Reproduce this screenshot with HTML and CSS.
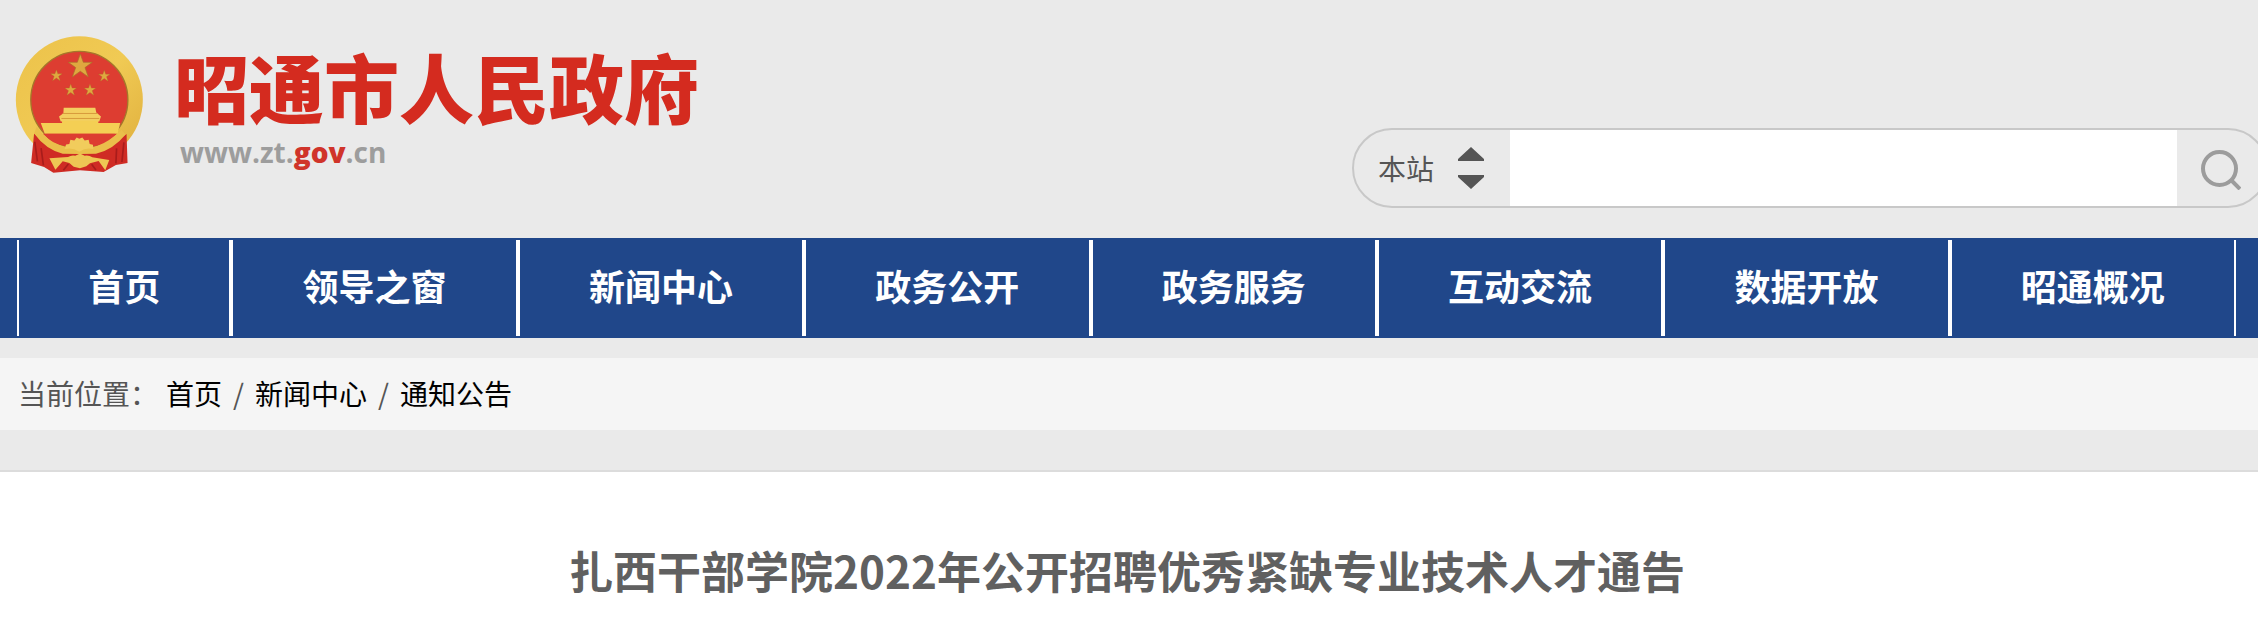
FILE: index.html
```
<!DOCTYPE html>
<html lang="zh-CN">
<head>
    <meta charset="UTF-8">
    <meta name="viewport" content="width=device-width, initial-scale=1.0">
    <title>昭通市人民政府</title>
    <link rel="stylesheet" href="styles.css">
</head>
<body>
    <header class="header">
        <a class="logo" href="#">
            <svg class="emblem" viewBox="45 48 387 412" aria-hidden="true">
                <defs>
                    <linearGradient id="gold" x1="0" y1="0" x2="1" y2="1">
                        <stop offset="0" stop-color="#ecc24a"/>
                        <stop offset="0.5" stop-color="#f0ca54"/>
                        <stop offset="1" stop-color="#dfae3c"/>
                    </linearGradient>
                    <path id="star" d="M0-36 9-11 36-11 14 5 24 33 0 16-24 33-14 5-36-11-9-11Z"/>
                </defs>
                <circle cx="238" cy="240" r="191" fill="url(#gold)"/>
                <circle cx="238" cy="240" r="146" fill="#dd3d31" stroke="#a4772a" stroke-width="4"/>
                <g fill="#dfa83f" stroke="#a8702a" stroke-width="2">
                    <use href="#star" transform="translate(241 138)"/>
                    <use href="#star" transform="translate(169 167) scale(.48)"/>
                    <use href="#star" transform="translate(313 168) scale(.48)"/>
                    <use href="#star" transform="translate(212 210) scale(.48)"/>
                    <use href="#star" transform="translate(270 210) scale(.48)"/>
                </g>
                <path d="M191 264H286L289 278 303 290 298 305H182L177 290 190 280Z" fill="#f3cf60"/>
                <path d="M188 281H292M184 296H298" stroke="#d79b3c" stroke-width="3"/>
                <path d="M122 310H186V303H295V310H361L353 342H134Z" fill="#f4cf54"/>
                <path d="M102 341 134 366 180 386 203 393 240 388 282 392 345 368 380 343 383 430 348 436 311 457 240 452 160 459 132 442 93 430Z" fill="#cf2b24"/>
                <path d="M128 342H352L318 371 278 381 240 362 200 381 158 369Z" fill="#dd3d31"/>
                <path d="M102 341Q137 389 188 402L238 403 288 402Q340 390 377 344L365 330 345 348Q310 376 278 382L240 388 200 382Q158 374 127 342L110 320Z" fill="#eabf4b"/>
                <path d="M194 388 198 374 208 373 211 360 223 362 230 353 238 357 247 353 254 362 266 360 269 373 279 375 280 388Q258 382 238 396 217 382 194 388Z" fill="#f1cc5c"/>
                <path d="M148 416 204 412Q214 405 226 408L240 401 254 408Q268 406 277 413L328 421 316 452 296 424 270 431 259 440 240 446 221 441 208 430 188 425 166 450Z" fill="#eec654"/>
                <path d="M104 366 112 425M123 385 130 437M372 368 366 427M350 386 348 431M205 433 190 452M275 434 288 451" stroke="#a81c1b" stroke-width="5" fill="none"/>
            </svg>
            <span class="logo-text">
                <span class="site-name">昭通市人民政府</span>
                <span class="site-url">www.zt.<b>gov</b>.cn</span>
            </span>
        </a>
        <form class="search">
            <label class="scope">
                <select class="scope-select" aria-label="搜索范围">
                    <option>本站</option>
                </select>
                <svg class="scope-arrows" viewBox="0 0 26 42" aria-hidden="true">
                    <path d="M13 0 26 12V14H0V12ZM0 28H26V30L13 42 0 30Z" fill="#555"/>
                </svg>
            </label>
            <input class="search-input" type="text" aria-label="搜索">
            <button class="search-btn" type="submit" aria-label="搜索">
                <svg class="search-icon" viewBox="0 0 40 40" fill="none" stroke="#9c9c9c" stroke-width="4" aria-hidden="true">
                    <circle cx="18.500" cy="18.500" r="16.500"/>
                    <path d="M30 30 39 39"/>
                </svg>
            </button>
        </form>
    </header>

    <nav class="nav">
        <ul class="nav-list">
            <li><a href="#">首页</a></li>
            <li><a href="#">领导之窗</a></li>
            <li><a href="#">新闻中心</a></li>
            <li><a href="#">政务公开</a></li>
            <li><a href="#">政务服务</a></li>
            <li><a href="#">互动交流</a></li>
            <li><a href="#">数据开放</a></li>
            <li><a href="#">昭通概况</a></li>
        </ul>
    </nav>

    <div class="breadcrumb">
        <span class="label">当前位置：</span>
        <a href="#">首页</a>
        <span class="slash">/</span>
        <a href="#">新闻中心</a>
        <span class="slash">/</span>
        <a href="#">通知公告</a>
    </div>

    <main class="article">
        <h1>扎西干部学院2022年公开招聘优秀紧缺专业技术人才通告</h1>
    </main>
</body>
</html>
```
FILE: styles.css
```
* {
    box-sizing: border-box;
}

body {
    margin: 0;
    min-height: 100vh;
    display: flex;
    flex-direction: column;
    overflow-x: hidden;
    background-color: #eaeaea;
    font-family: "Noto Sans CJK SC", sans-serif;
    font-size: 28px;
    color: #555;
}

a {
    color: inherit;
    text-decoration: none;
}

.header {
    display: flex;
    justify-content: space-between;
    align-items: flex-end;
    padding: 36px 0 30px 15px;
}

.logo {
    display: flex;
    align-items: flex-start;
    gap: 30px;
    padding-bottom: 35px;
}

.emblem {
    width: 129px;
    height: 137px;
}

.logo-text {
    display: flex;
    flex-direction: column;
}

.site-name {
    font-size: 75px;
    line-height: 100px;
    font-weight: 900;
    color: #d42b1f;
}

.site-url {
    padding-left: 6px;
    font-family: "Open Sans", sans-serif;
    font-size: 28px;
    line-height: 32px;
    font-weight: bold;
    color: #9d9d9d;
}

.site-url b {
    color: #d0342a;
}

/* the pill runs slightly past the right edge of the page */
.search {
    display: flex;
    width: 916px;
    height: 80px;
    margin-right: -10px;
    border: 2px solid #c8c8c8;
    border-radius: 40px;
    overflow: hidden;
}

.scope {
    display: flex;
    align-items: center;
    gap: 24px;
    width: 156px;
    padding-left: 24px;
}

.scope-select {
    appearance: none;
    width: 56px;
    padding: 0;
    border: none;
    background: none;
    font-family: inherit;
    font-size: 28px;
    color: #555;
}

.scope-arrows {
    width: 26px;
    height: 42px;
}

.search-input {
    flex: 1;
    min-width: 0;
    padding: 0 16px;
    border: none;
    background-color: #fff;
    font-family: inherit;
    font-size: 28px;
    outline: none;
}

.search-btn {
    display: flex;
    align-items: center;
    width: 89px;
    padding: 4px 0 0 24px;
    border: none;
    background: none;
    cursor: pointer;
}

.search-icon {
    width: 40px;
    height: 40px;
}

.nav {
    padding: 2px 22px 2px 17px;
    background-color: #20478a;
}

.nav-list {
    display: flex;
    margin: 0;
    padding: 0;
    list-style: none;
}

.nav-list li {
    flex: 1 1 auto;
    border: solid #fff;
    border-width: 0 2px;
    text-align: center;
}

.nav-list a {
    display: block;
    padding: 0 68px 6px;
    font-size: 36px;
    line-height: 90px;
    font-weight: bold;
    color: #fff;
}

.breadcrumb {
    display: flex;
    margin: 20px 0 40px;
    padding: 0 18px 2px;
    background-color: #f5f5f5;
    line-height: 70px;
}

.breadcrumb .label {
    margin-right: 8px;
}

.breadcrumb a {
    color: #000;
}

.breadcrumb .slash {
    width: 33px;
    text-align: center;
}

.article {
    flex: 1;
    padding: 66px 24px 0 20px;
    border-top: 2px solid #dcdcdc;
    background-color: #fff;
}

.article h1 {
    margin: 0;
    font-size: 44px;
    line-height: 64px;
    font-weight: bold;
    text-align: center;
    color: #606060;
}
```
